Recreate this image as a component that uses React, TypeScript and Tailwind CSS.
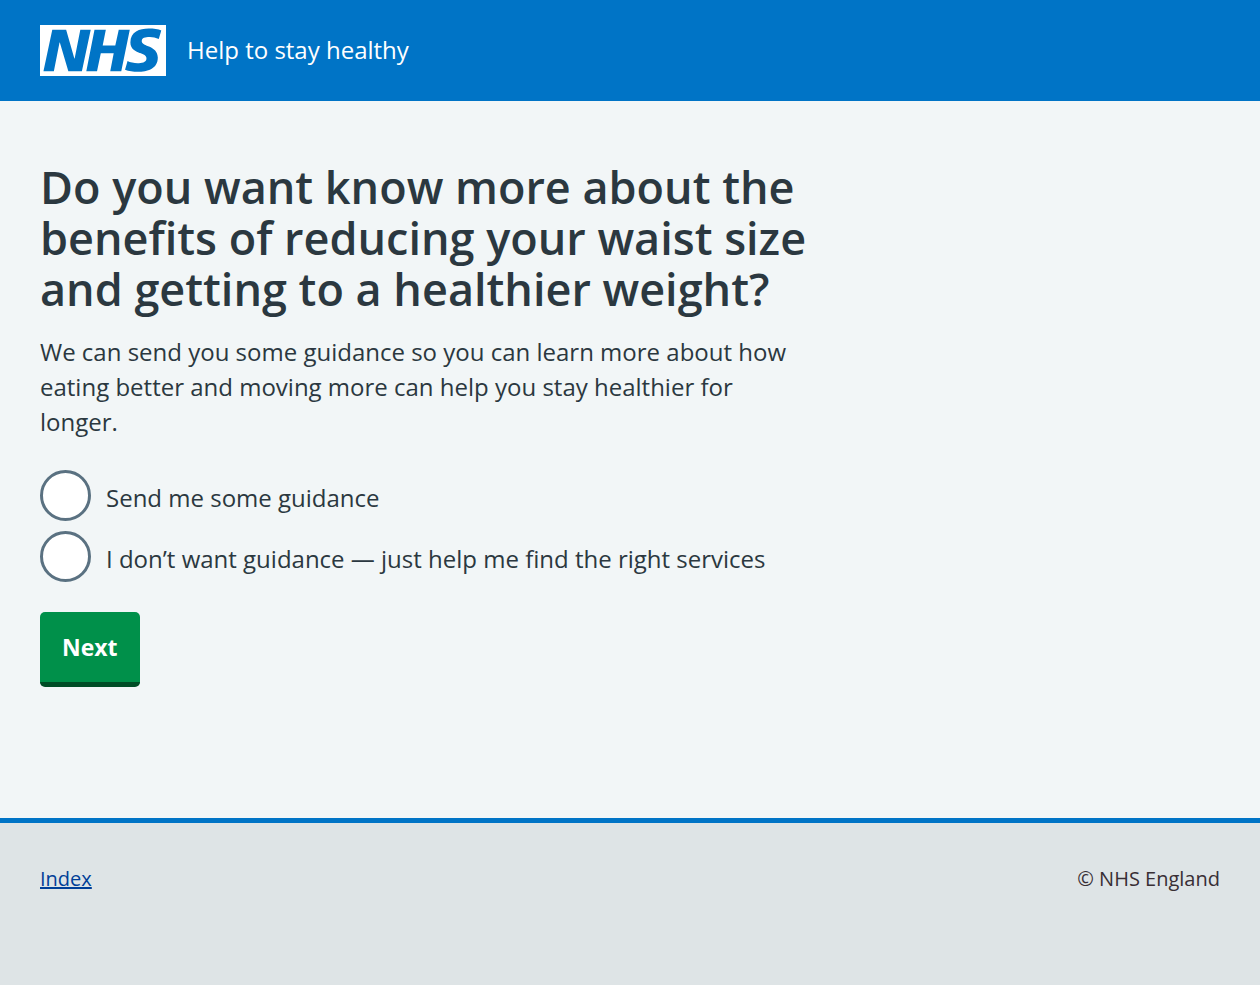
import React from "react";

function NhsLogo() {
  return (
    <svg
      className="h-[51px] w-[126px] shrink-0"
      viewBox="0 0 200 80"
      preserveAspectRatio="none"
      role="img"
      aria-label="NHS"
    >
      <path
        fill="#fff"
        d="M200 0v80H0V0h200Zm-27.5 5.5c-14.5 0-29 5-29 22 0 10.2 7.7 13.5 14.7 16.3l.7.3c5.4 2 10.1 3.9 10.1 8.4 0 6.5-8.5 7.5-14 7.5s-12.5-1.5-16-3.5L135 70c5.5 2 13.5 3.5 20 3.5 15.5 0 32-4.5 32-22.5 0-19.5-25.5-16.5-25.5-25.5 0-5.5 5.5-6.5 12.5-6.5a35 35 0 0 1 14.5 3l4-13.5c-4.5-2-12-3-20-3Zm-131 2h-22l-14 65H22l9-45h.5l13.5 45h21.5l14-65H64l-9 45h-.5l-13-45Zm63 0h-18l-13 65h17l6-28H117l-5.5 28H129l13.5-65H125L119.5 32h-20l5-24.5Z"
      />
    </svg>
  );
}

const options = [
  { id: "guidance-yes", value: "yes", label: "Send me some guidance" },
  {
    id: "guidance-no",
    value: "no",
    label: "I don’t want guidance — just help me find the right services",
  },
];

export default function App() {
  return (
    <div className="flex min-h-screen flex-col bg-[#dee4e6] font-['Open_Sans','Noto_Sans',sans-serif] text-[#2b3840]">
      <header className="flex items-center gap-[21px] bg-[#0074c6] px-10 py-[25px] text-white">
        <NhsLogo />
        <span className="pb-px text-[24px] leading-[30px]">Help to stay healthy</span>
      </header>

      <main className="bg-[#f2f6f7] px-10 pt-[60px] pb-[131px]">
        <form className="w-2/3 pr-4" onSubmit={(e) => e.preventDefault()}>
          <h1 className="mb-5 text-[45px] leading-[51px] font-semibold">
            Do you want know more about the benefits of reducing your waist size
            and getting to a healthier weight?
          </h1>
          <p className="mb-[31px] text-[24px] leading-[35px]">
            We can send you some guidance so you can learn more about how eating
            better and moving more can help you stay healthier for longer.
          </p>
          <div className="mb-[30px] flex flex-col gap-[10px]">
            {options.map((o) => (
              <div key={o.id} className="flex items-center gap-[15px]">
                <input
                  type="radio"
                  name="guidance"
                  id={o.id}
                  value={o.value}
                  className="size-[51px] shrink-0 appearance-none rounded-full border-[3px] border-[#5a7181] bg-white checked:bg-[#212b32] checked:shadow-[inset_0_0_0_10px_white]"
                />
                <label htmlFor={o.id} className="pt-1 text-[24px] leading-[35px]">
                  {o.label}
                </label>
              </div>
            ))}
          </div>
          <button
            type="submit"
            className="block rounded-[5px] border-b-[5px] border-[#004d26] bg-[#00904a] px-[22px] py-[18px] text-[23px] leading-[34px] font-bold text-white"
          >
            Next
          </button>
        </form>
      </main>

      <footer className="flex items-start justify-between border-t-[5px] border-[#0074c6] px-10 pt-[41px] text-[20px] leading-[30px]">
        <a href="#index" className="text-[#003f98] underline">
          Index
        </a>
        <p className="text-[#382f35]">© NHS England</p>
      </footer>
    </div>
  );
}
